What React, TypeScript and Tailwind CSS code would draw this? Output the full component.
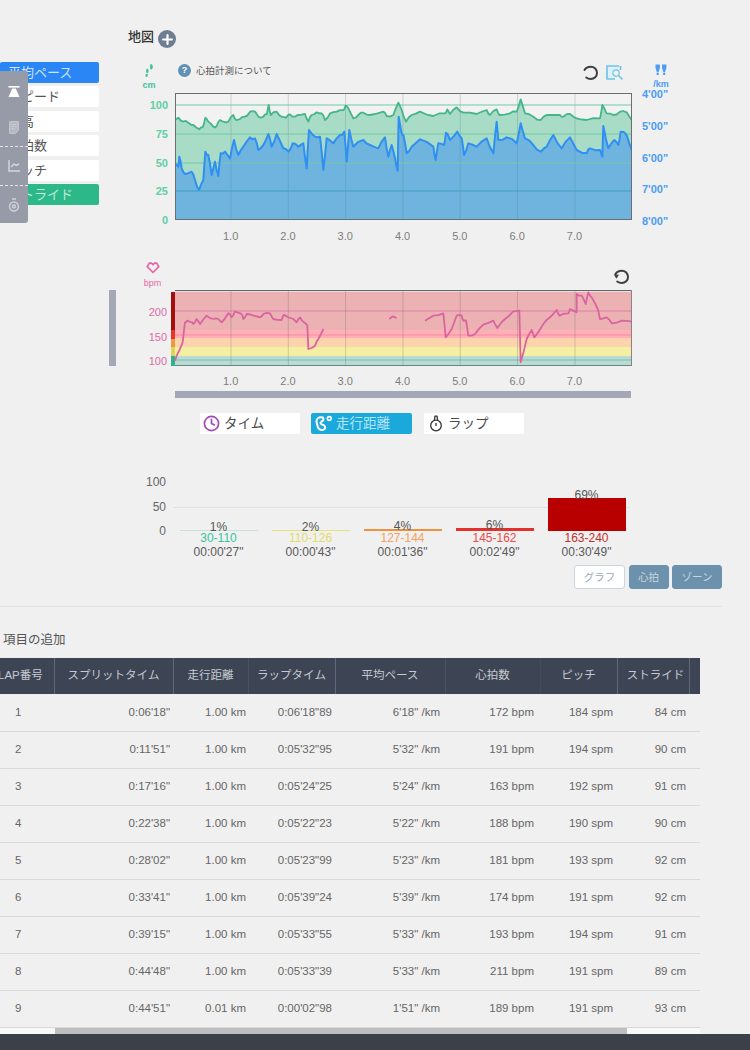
import { Clock, Plus } from "lucide-react";

type Pt = [number, number];

// traced from the picture, each trace in the coordinates of its own 3x crop
const toPlot = (pts: number[][], ox: number, oy: number): Pt[] =>
  pts.map(([x, y]) => [x / 3 + ox, y / 3 + oy]);

// the real lines are noisier than the trace, add a small fixed wobble between points
const wobble = (pts: Pt[], amount: number): Pt[] =>
  pts.flatMap((p, i) => {
    const next = pts[i + 1];
    if (!next) return [p];
    const mid: Pt = [(p[0] + next[0]) / 2, (p[1] + next[1]) / 2 + Math.sin(i * 2.3) * amount];
    return [p, mid];
  });

const greenLine: Pt[] = wobble([
  ...toPlot([[525,300],[535,293],[550,305],[565,308],[580,315],[598,328],[608,322],[616,293],[625,305],[640,320],[650,318],[660,300],[670,305],[685,305],[700,285],[708,300],[720,297],[735,290],[750,275],[765,275],[775,290],[790,290],[800,283],[806,255],[812,285],[830,275],[845,290],[858,293],[870,283],[885,290],[900,285],[915,282],[925,305],[935,285],[950,277],[965,280],[975,300],[990,280],[1010,275],[1030,270],[1036,258],[1045,265],[1060,295],[1075,285],[1090,278]], -175, -73),
  ...toPlot([[0,195],[40,185],[50,198],[70,195],[85,158],[95,180],[108,215],[125,195],[150,185],[190,198],[225,190],[232,178],[240,192],[260,172],[280,188],[320,192],[350,180],[360,195],[380,178],[388,195],[420,190],[440,185],[452,148],[465,190],[490,200],[512,210],[530,195],[570,195],[580,200],[600,192],[620,205],[650,210],[690,205],[697,165],[710,190],[730,195],[750,185],[770,187],[785,210]], 195, -43),
], 1.2);

const blueLine: Pt[] = wobble([
  ...toPlot([[525,430],[535,440],[538,410],[545,445],[555,462],[575,455],[585,480],[597,510],[610,480],[616,395],[625,405],[635,465],[645,425],[655,468],[662,400],[675,395],[690,415],[702,360],[715,405],[730,380],[750,352],[765,355],[775,390],[790,375],[805,342],[815,380],[830,342],[850,385],[865,395],[878,370],[895,380],[910,370],[920,445],[927,330],[945,350],[960,350],[970,450],[980,355],[1000,370],[1020,345],[1033,335],[1040,425],[1048,330],[1060,380],[1090,360]], -175, -73),
  ...toPlot([[0,285],[25,295],[45,262],[55,320],[65,285],[75,325],[83,362],[86,200],[95,250],[100,255],[110,310],[125,290],[150,268],[190,290],[197,330],[205,280],[222,285],[228,248],[240,270],[262,245],[275,265],[282,315],[295,280],[320,290],[350,265],[370,310],[380,215],[385,270],[410,262],[440,280],[452,220],[465,265],[490,285],[512,305],[530,290],[550,255],[575,295],[600,262],[620,300],[650,310],[660,295],[690,300],[697,320],[700,228],[715,295],[733,270],[745,285],[752,245],[770,255],[785,300]], 195, -43),
], 1.5);

const heartLines: Pt[][] = [
  wobble(toPlot([[225,320],[230,305],[248,265],[255,205],[262,200],[275,205],[280,210],[290,195],[300,210],[320,185],[340,195],[355,195],[365,205],[385,178],[395,190],[405,172],[425,180],[430,195],[440,180],[460,185],[480,190],[490,180],[510,178],[520,195],[545,198],[552,182],[580,195],[590,205],[600,190],[612,205],[622,215],[625,285],[645,275],[655,255],[670,225]], -75, -36), 0.8),
  toPlot([[28,195],[38,187],[50,192]], 205, -36),
  wobble(toPlot([[135,200],[160,185],[190,178],[197,250],[215,225],[230,185],[245,185],[250,200],[258,200],[265,245],[285,240],[310,212],[340,200],[352,222],[375,195],[400,172],[418,170],[422,325],[440,255],[455,228],[463,250],[490,210],[510,190],[530,168],[538,185],[565,178],[570,165],[590,175],[590,120],[605,125],[617,150],[625,115],[635,130],[655,170],[660,195],[680,190],[695,208],[725,200],[755,203]], 205, -36), 0.8),
];

const str = (pts: Pt[]) => pts.map((p) => p.join(",")).join(" ");
const gridX = [56, 113.3, 170.6, 228, 285.2, 342.5, 400];
const kmLabels = ["1.0", "2.0", "3.0", "4.0", "5.0", "6.0", "7.0"];

const zones = [
  { pct: "1%", bar: "h-px bg-[#c4e4da]", range: "30-110", rangeColor: "text-[#3cc39d]", time: "00:00'27\"" },
  { pct: "2%", bar: "h-px bg-[#e8e27a]", range: "110-126", rangeColor: "text-[#e2dc68]", time: "00:00'43\"" },
  { pct: "4%", bar: "h-[2px] bg-[#f0913f]", range: "127-144", rangeColor: "text-[#f5a35f]", time: "00:01'36\"" },
  { pct: "6%", bar: "h-[3px] bg-[#e0322a]", range: "145-162", rangeColor: "text-[#ee4c4c]", time: "00:02'49\"" },
  { pct: "69%", bar: "h-[33px] bg-[#b80000]", range: "163-240", rangeColor: "text-[#c0302a]", time: "00:30'49\"" },
];

const columns = [
  { label: "LAP番号", width: "w-[54px]", th: "border-[#5f6778] text-left -indent-[2px]", td: "text-left pl-[15px]" },
  { label: "スプリットタイム", width: "w-[119px]", th: "border-[#5f6778]", td: "text-right pr-[3px]" },
  { label: "走行距離", width: "w-[75px]", th: "border-[#4a5262]", td: "text-right pr-[2px]" },
  { label: "ラップタイム", width: "w-[87px]", th: "border-[#5f6778]", td: "text-right pr-[3px]" },
  { label: "平均ペース", width: "w-[110px]", th: "border-[#4a5262]", td: "text-right pr-[5px]" },
  { label: "心拍数", width: "w-[95px]", th: "border-[#444c5b]", td: "text-right pr-[6px]" },
  { label: "ピッチ", width: "w-[77px]", th: "border-[#5f6778]", td: "text-right pr-[4px]" },
  { label: "ストライド", width: "w-[72px]", th: "border-[#5f6778] pl-[5px]", td: "text-right pr-[3px]" },
];

const laps = [
  ["1", "0:06'18\"", "1.00 km", "0:06'18\"89", "6'18\" /km", "172 bpm", "184 spm", "84 cm"],
  ["2", "0:11'51\"", "1.00 km", "0:05'32\"95", "5'32\" /km", "191 bpm", "194 spm", "90 cm"],
  ["3", "0:17'16\"", "1.00 km", "0:05'24\"25", "5'24\" /km", "163 bpm", "192 spm", "91 cm"],
  ["4", "0:22'38\"", "1.00 km", "0:05'22\"23", "5'22\" /km", "188 bpm", "190 spm", "90 cm"],
  ["5", "0:28'02\"", "1.00 km", "0:05'23\"99", "5'23\" /km", "181 bpm", "193 spm", "92 cm"],
  ["6", "0:33'41\"", "1.00 km", "0:05'39\"24", "5'39\" /km", "174 bpm", "191 spm", "92 cm"],
  ["7", "0:39'15\"", "1.00 km", "0:05'33\"55", "5'33\" /km", "193 bpm", "194 spm", "91 cm"],
  ["8", "0:44'48\"", "1.00 km", "0:05'33\"39", "5'33\" /km", "211 bpm", "191 spm", "89 cm"],
  ["9", "0:44'51\"", "0.01 km", "0:00'02\"98", "1'51\" /km", "189 bpm", "191 spm", "93 cm"],
];

function ReloadIcon({ arrow }: { arrow?: boolean }) {
  return (
    <svg width="18" height="16" viewBox="0 0 18 16" fill="none">
      <path d="M2.500 5C3.800 2.800 6 1.800 8.800 1.800c3.500 0 6.200 2.700 6.200 6.100S12.300 14 8.800 14c-1.800 0-3.200-.4-4.600-1.500" stroke="#3f3f3f" strokeWidth="2" strokeLinecap="round" />
      {arrow && <path d="M.8 5.200 6 5.800 3.300 9.800z" fill="#3f3f3f" />}
    </svg>
  );
}

function ChartPlotTop() {
  return (
    <svg width="457" height="127" viewBox="0 0 457 127" className="shrink-0">
      <rect width="457" height="127" fill="#f2f2f2" />
      <polygon points={`0,127 ${str(greenLine)} 457,127`} fill="#a9dcc6" />
      <polygon points={`0,127 ${str(blueLine)} 457,127`} fill="#6eb4de" />
      {gridX.map((x) => (
        <line key={x} x1={x} x2={x} y1="0" y2="127" stroke="#5d7f8c" strokeOpacity="0.28" />
      ))}
      {[12, 41, 70].map((y) => (
        <line key={y} x1="0" x2="457" y1={y} y2={y} stroke="#72c9a6" />
      ))}
      <line x1="0" x2="457" y1="98" y2="98" stroke="#3f9fbf" />
      <polyline points={str(greenLine)} fill="none" stroke="#45b58a" strokeWidth="1.8" strokeLinejoin="round" />
      <polyline points={str(blueLine)} fill="none" stroke="#2f90f2" strokeWidth="2" strokeLinejoin="round" />
      <rect x="0.5" y="0.5" width="456" height="126" fill="none" stroke="#6a6e70" />
    </svg>
  );
}

function ChartPlotHeart() {
  return (
    <svg width="461" height="76" viewBox="-4 0 461 76" className="shrink-0">
      <rect x="0" y="0" width="457" height="76" fill="#e2e2e2" />
      <rect x="0" y="2" width="457" height="38" fill="#ecb1b3" />
      <rect x="0" y="40" width="457" height="8" fill="#ffb0b6" />
      <rect x="0" y="48" width="457" height="9" fill="#fdd3ad" />
      <rect x="0" y="57" width="457" height="9" fill="#f5efa4" />
      <rect x="0" y="66" width="457" height="10" fill="#b6ddd4" />
      <rect x="-4" y="2" width="4" height="38" fill="#a50d0d" />
      <rect x="-4" y="40" width="4" height="9" fill="#e8352a" />
      <rect x="-4" y="49" width="4" height="8" fill="#ee9a3e" />
      <rect x="-4" y="57" width="4" height="9" fill="#e0d35a" />
      <rect x="-4" y="66" width="4" height="10" fill="#2fb388" />
      <line x1="0" x2="457" y1="21" y2="21" stroke="#e07fae" />
      <line x1="0" x2="457" y1="45" y2="45" stroke="#f58aa5" />
      <line x1="0" x2="457" y1="70" y2="70" stroke="#8cb5ad" />
      {gridX.map((x) => (
        <line key={x} x1={x} x2={x} y1="0" y2="76" stroke="#666" strokeOpacity="0.28" />
      ))}
      {heartLines.map((pts, i) => (
        <polyline key={i} points={str(pts)} fill="none" stroke="#d9649f" strokeWidth="1.8" strokeLinejoin="round" />
      ))}
      <line x1="0" x2="457" y1="0.5" y2="0.5" stroke="#6a6466" />
      <line x1="456.5" x2="456.5" y1="0" y2="76" stroke="#8a8486" />
      <line x1="0" x2="457" y1="75.5" y2="75.5" stroke="#6f8580" />
    </svg>
  );
}

function KmLabels() {
  return (
    <div className="flex ml-[47px] pl-[27px] h-3 leading-3 text-[11px] text-[#7d7d7d]">
      {kmLabels.map((km) => (
        <span key={km} className="w-[57.3px] text-center">{km}</span>
      ))}
    </div>
  );
}

function Sidebar() {
  const btn = "h-[21px] rounded-[2px] pl-2 text-[13px] leading-[21px]";
  return (
    <div className="w-[99px] shrink-0 pt-[31.5px] flex flex-col gap-[3.5px]">
      <div className={`${btn} bg-[#2a85f5] text-[#cfe3fb] relative`}>
        平均ペース
        <span className="absolute left-0 top-[9px] w-[3px] h-[3px] rounded-full bg-white" />
      </div>
      <div className={`${btn} bg-white text-[#555]`}>スピード</div>
      <div className={`${btn} bg-white text-[#555]`}>標高</div>
      <div className={`${btn} bg-white text-[#555]`}>心拍数</div>
      <div className={`${btn} bg-white text-[#555]`}>ピッチ</div>
      <div className={`${btn} bg-[#2db88a] text-[#bfeadb]`}>ストライド</div>
    </div>
  );
}

function FloatingTools() {
  return (
    <div className="absolute left-0 top-[71px] w-[28px] h-[152px] rounded-r-[3px] bg-[#979ba8] flex flex-col items-center">
      <div className="h-[38px] w-full flex items-center justify-center pt-1">
        <svg width="12" height="12" viewBox="0 0 12 12">
          <rect x="0.5" y="0" width="11" height="1.6" fill="#fff" />
          <path d="M4.2 2.6h3.6L11.5 11H.5z" fill="#fff" />
        </svg>
      </div>
      <div className="h-[38px] w-full flex items-center justify-center border-b border-dashed border-[#e4e5ea]">
        <svg width="10" height="13" viewBox="0 0 10 13" fill="none" stroke="#c9ccd3">
          <path d="M.7.7h8.6v8.6L6.5 12.3H.7z" fill="#b4b7c0" />
          <path d="M2.2 3.5h5.5M2.2 5.7h5.5M2.2 8h4" />
        </svg>
      </div>
      <div className="h-[39px] w-full flex items-center justify-center border-b border-dashed border-[#e4e5ea]">
        <svg width="12" height="12" viewBox="0 0 12 12" fill="none" stroke="#d6d8de" strokeWidth="1.4">
          <path d="M1 0v11h11" />
          <path d="M3 7l3-3 2 1.5 3-1.5" />
        </svg>
      </div>
      <div className="flex-1 w-full flex items-center justify-center">
        <svg width="12" height="14" viewBox="0 0 12 14" fill="none" stroke="#cfd1d8" strokeWidth="1.5">
          <circle cx="6" cy="8.5" r="4.4" />
          <circle cx="6" cy="8.5" r="1.4" />
          <path d="M4 1h4" />
        </svg>
      </div>
    </div>
  );
}

export default function App() {
  return (
    <div className="relative w-[750px] h-[1050px] overflow-hidden bg-[#f0f0f0] flex flex-col font-['Liberation_Sans','Noto_Sans_CJK_JP',sans-serif]">
      <div className="flex pt-[30px]">
        <Sidebar />
        <div className="flex-1 pl-[29px]">
          <div className="flex items-center gap-[4px] h-[18px]">
            <span className="text-[13px] font-medium text-[#333] -mt-[4px]">地図</span>
            <span className="w-[18px] h-[18px] rounded-full bg-[#6d7d92] flex items-center justify-center">
              <Plus size={15} color="#fff" strokeWidth={3.5} />
            </span>
          </div>

          <div className="flex mt-[16px] h-[29px] w-[552px]">
            <div className="w-[42px] flex flex-col items-center">
              <svg width="10" height="13" viewBox="0 0 10 13" fill="#47c39b">
                <path d="M6.500 0c1.800.2 2.600 1.600 2.300 3.400C8.400 5.200 7.300 6 6.600 5.400 5.800 4.500 5.800 1.400 6.500 0zM2.800 4.500c1.300.2 2 1.400 1.800 3-.3 1.500-1.300 2.100-2 1.600C1.800 8.200 2 5.400 2.800 4.500zM1.500 10.200l2.400-.2c.2 1.400-.2 3-1.300 3s-1.300-1.500-1.100-2.800z" />
              </svg>
              <span className="text-[9px] leading-3 mt-[2px] text-[#47c39b] font-bold">cm</span>
            </div>
            <div className="ml-[8px] flex items-start gap-[5px] h-[14px]">
              <span className="w-[13px] h-[13px] rounded-full bg-[#5f90b5] text-white text-[9px] font-bold leading-[13px] text-center">?</span>
              <span className="text-[9.5px] leading-[13px] text-[#555]">心拍計測について</span>
            </div>
            <div className="flex-1 flex justify-end items-start gap-[6px] pt-[1px] pr-[8px]">
              <ReloadIcon />
              <svg width="18" height="16" viewBox="0 0 18 16" fill="none">
                <path d="M13 1H1v13h8" stroke="#6cc3e6" strokeWidth="1.6" fill="#dff1f8" />
                <path d="M14.5 1v4" stroke="#6cc3e6" strokeWidth="1.6" />
                <circle cx="10" cy="8" r="3.2" stroke="#6cc3e6" strokeWidth="1.2" fill="#f2f2f2" />
                <path d="M12.5 10.5l4 4" stroke="#6cc3e6" strokeWidth="1.6" />
              </svg>
            </div>
            <div className="w-[48px] pl-[10px] flex flex-col items-center">
              <svg width="12" height="11" viewBox="0 0 12 11" fill="#4c9df5">
                <path d="M.5.5h4.400v3.400L3.400 8.500H2L.5 3.900zM7 .5h4.400v3.400L9.900 8.500H8.500L7 3.900z" />
                <rect x="1.600" y="9" width="2.100" height="2" />
                <rect x="8.100" y="9" width="2.100" height="2" />
              </svg>
              <span className="text-[9px] leading-3 mt-[3px] text-[#4c9df5] font-bold">/km</span>
            </div>
          </div>

          <div className="flex h-[127px] text-[11px] leading-3">
            <div className="w-[40px] h-[127px] mt-[6px] flex flex-col justify-between items-end font-bold text-[#5fcfa6]">
              {["100", "75", "50", "25", "0"].map((v) => <span key={v}>{v}</span>)}
            </div>
            <div className="w-[7px]" />
            <ChartPlotTop />
            <div className="ml-[10px] h-[139px] -mt-[5px] flex flex-col justify-between text-[#4c9df5] font-bold">
              {["4'00\"", "5'00\"", "6'00\"", "7'00\"", "8'00\""].map((v) => <span key={v}>{v}</span>)}
            </div>
          </div>

          <div className="mt-[10px]"><KmLabels /></div>

          <div className="flex mt-[20px] h-[28px] w-[552px]">
            <div className="w-[49px] flex flex-col items-center">
              <svg width="14" height="12" viewBox="0 0 14 12" fill="none" stroke="#e667a8" strokeWidth="1.7" strokeLinejoin="round">
                <path d="M7 10.500L1.200 4.600 3.300 1.200h2.200L7 2.600l1.500-1.400h2.200l2.100 3.400z" />
              </svg>
              <span className="text-[9px] leading-3 mt-[3px] text-[#e667a8]">bpm</span>
            </div>
            <div className="flex-1 flex justify-end pt-[7px] pr-[49px]">
              <ReloadIcon arrow />
            </div>
          </div>

          <div className="flex h-[75px] -ml-[19px]">
            <div className="w-[7px] h-[76px] bg-[#a3a7b6]" />
            <div className="w-[51px] h-[85px] pt-[16px] flex flex-col gap-[12.500px] items-end text-[11px] leading-3 text-[#df6ba7]">
              <span>200</span>
              <span>150</span>
              <span>100</span>
            </div>
            <div className="ml-[4px]"><ChartPlotHeart /></div>
          </div>

          <div className="mt-[10px]"><KmLabels /></div>
          <div className="ml-[47px] mt-[4px] w-[456px] h-[7px] bg-[#a3a7b6]" />

          <div className="flex ml-[72px] mt-[15px] h-[21px] text-[13.5px] leading-[21px]">
            <div className="w-[100px] bg-white rounded-[1px] flex items-center pl-[3px] gap-[4px] text-[#4a4a4a]">
              <Clock size={17} color="#a349b5" strokeWidth={2.4} />
              タイム
            </div>
            <div className="w-[101px] ml-[11px] bg-[#1ba9dc] rounded-[2px] flex items-center pl-[4px] gap-[3px] text-[#b5e4f5]">
              <svg width="18" height="17" viewBox="0 0 18 17" fill="none" stroke="#fff" strokeWidth="2" strokeLinejoin="round">
                <path d="M7 2.500C4 1.500 1.500 3.500 1.500 6.300c0 2 1 3 1 4.500 0 2.700 3 4.700 5.700 4 2.300-.7 2.600-3 1-4.300-1.300-1-3.600-.7-3.700-2.500-.1-1.500 2.200-1.600 2.800-3 .3-.9 0-2-.3-2.500z" />
                <circle cx="14.300" cy="3.500" r="1.900" strokeWidth="1.600" />
              </svg>
              走行距離
            </div>
            <div className="w-[100px] ml-[12px] bg-white rounded-[1px] flex items-center pl-[5px] gap-[5px] text-[#4a4a4a]">
              <svg width="14" height="17" viewBox="0 0 14 17" fill="none" stroke="#333" strokeWidth="1.300" strokeLinejoin="round">
                <circle cx="7" cy="10.500" r="5.300" />
                <path d="M5.300 5.500 6 1.200h2l.7 4.300" />
                <path d="M7 8v3" />
              </svg>
              ラップ
            </div>
          </div>
        </div>
      </div>

      <div className="flex mt-[42px] pl-[128px]">
        <div className="w-[38px] h-[61px] flex flex-col justify-between items-end text-[12px] leading-3 text-[#666]">
          <span>100</span>
          <span>50</span>
          <span>0</span>
        </div>
        <div className="relative flex ml-[6.5px]">
          <div className="absolute left-0 top-[31px] w-[457px] h-px bg-[#e2e2e2]" />
          {zones.map((z) => (
            <div key={z.range} className="relative w-[92px] flex flex-col items-center text-[12px] leading-3">
              <div className="h-[55px] w-full flex flex-col justify-end items-center">
                <span className="-mb-[3px] text-[#555] relative z-10">{z.pct}</span>
                <div className={`w-[78px] ${z.bar}`} />
              </div>
              <span className={`mt-px ${z.rangeColor}`}>{z.range}</span>
              <span className="mt-[2px] text-[#5a5a5a]">{z.time}</span>
            </div>
          ))}
        </div>
      </div>

      <div className="flex justify-end gap-[3.500px] pr-[28px] mt-[7px] h-[24px] text-[10.500px] leading-[22px]">
        <div className="w-[51px] text-center bg-white border border-[#c8d6e0] rounded-[3px] text-[#9aaab8]">グラフ</div>
        <div className="w-[40px] text-center bg-[#6b91ac] border border-[#6b91ac] rounded-[3px] text-[#c8d5df]">心拍</div>
        <div className="w-[50px] text-center bg-[#6b91ac] border border-[#6b91ac] rounded-[3px] text-[#c8d5df]">ゾーン</div>
      </div>

      <div className="mt-[17px] w-[722px] border-t border-[#e3e3e3]" />

      <div className="pl-[3px] mt-[25px] h-[16px] text-[12.500px] leading-4 text-[#555]">項目の追加</div>

      <div className="mt-[10px] w-[700px] overflow-hidden">
        <table className="w-[700px] table-fixed">
          <colgroup>
            {columns.map((c) => <col key={c.label} className={c.width} />)}
            <col className="w-[11px]" />
          </colgroup>
          <thead>
            <tr className="h-[36px] bg-[#3d4554]">
              {columns.map((c) => (
                <th key={c.label} className={`border-r whitespace-nowrap text-center text-[11.5px] font-normal text-[#c5c9d0] ${c.th}`}>
                  {c.label}
                </th>
              ))}
              <th />
            </tr>
          </thead>
          <tbody>
            {laps.map((row) => (
              <tr key={row[0]} className="h-[37px]">
                {row.map((cell, i) => (
                  <td key={i} className={`border-b border-[#dadada] text-[11.5px] text-[#666] whitespace-nowrap ${columns[i].td}`}>
                    {cell}
                  </td>
                ))}
                <td className="border-b border-[#dadada]" />
              </tr>
            ))}
          </tbody>
        </table>
        <div className="h-[6px] bg-[#f8f8f8] pl-[55px]">
          <div className="w-[572px] h-full bg-[#bfbfc1]" />
        </div>
      </div>

      <div className="mt-auto h-[16px] bg-[#3c4048]" />

      <FloatingTools />
    </div>
  );
}
